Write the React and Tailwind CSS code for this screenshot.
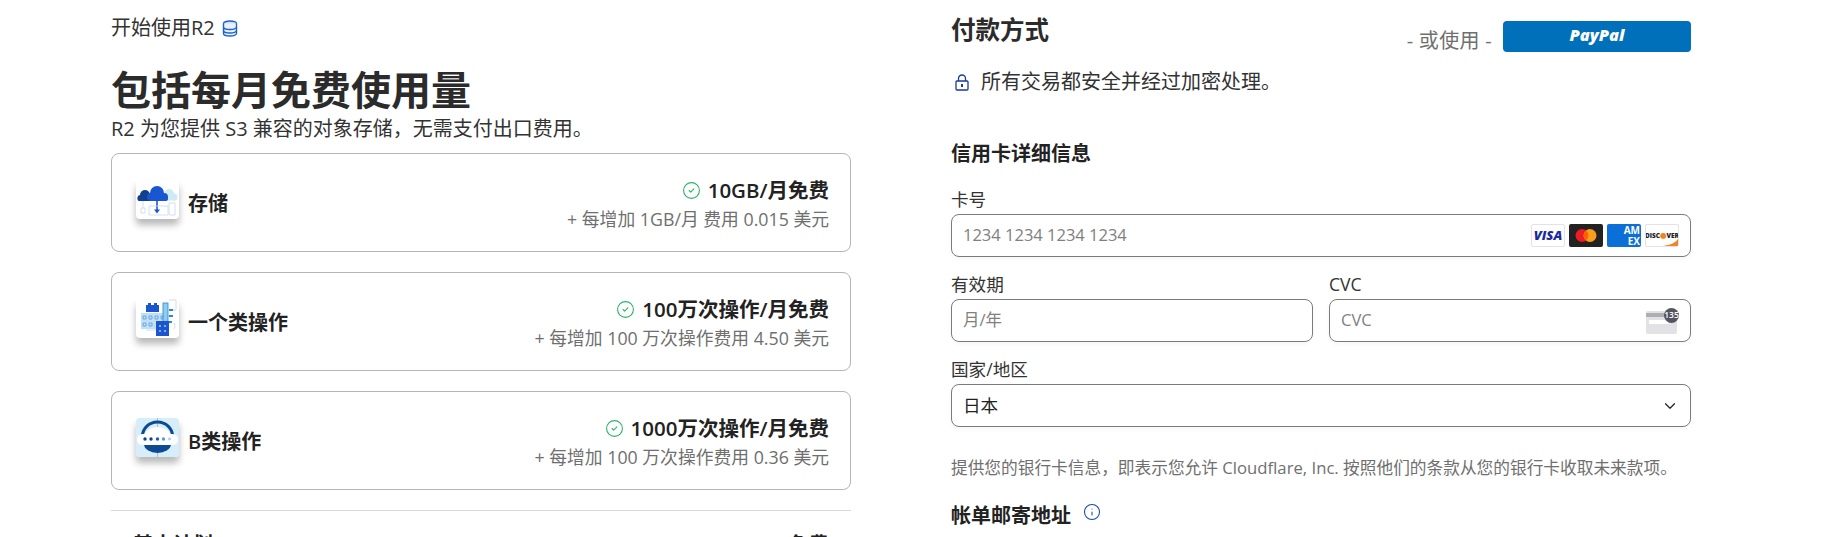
import React from 'react';
import { ChevronDown, CircleCheck, Info } from 'lucide-react';

const sans = 'font-["Open_Sans","Noto_Sans_CJK_SC",sans-serif]';

const DatabaseIcon = () => (
  <svg width="16" height="17" viewBox="0 0 16 17" fill="none" className="ml-[7px]">
    <ellipse cx="8" cy="3.5" rx="6.5" ry="2.5" fill="#cfe0f7" stroke="#1d63c9" strokeWidth="1.4" />
    <path d="M1.5 3.5v10c0 1.4 2.9 2.5 6.5 2.5s6.5-1.1 6.5-2.5v-10" fill="#e8f0fb" stroke="#1d63c9" strokeWidth="1.4" />
    <path d="M1.5 7c0 1.4 2.9 2.5 6.5 2.5s6.5-1.1 6.5-2.5M1.5 10.5c0 1.4 2.9 2.5 6.5 2.5s6.5-1.1 6.5-2.5" stroke="#1d63c9" strokeWidth="1.4" />
  </svg>
);

const LockIcon = () => (
  <svg width="14" height="17" viewBox="0 0 14 17" fill="none">
    <rect x="1" y="7" width="12" height="9" rx="1" stroke="#1a3a9c" strokeWidth="1.3" />
    <path d="M3.5 7V4.5a3.5 3.5 0 0 1 7 0V7" stroke="#1a3a9c" strokeWidth="1.3" />
    <rect x="6" y="10" width="2" height="3" fill="#1a3a9c" />
  </svg>
);

const StorageTile = () => (
  <svg width="43" height="39" viewBox="0 0 43 39" fill="none">
    <g fill="#cfeaf5">
      <circle cx="33" cy="14" r="5" />
      <circle cx="38" cy="17" r="3.5" />
      <rect x="28" y="16" width="13" height="4.5" rx="2" />
    </g>
    <g fill="#123f8f">
      <circle cx="9" cy="15" r="5" />
      <circle cx="4.5" cy="18" r="3" />
      <rect x="1.5" y="17" width="16" height="4" rx="2" />
    </g>
    <g fill="#1a56d0">
      <circle cx="21" cy="13" r="7" />
      <circle cx="15" cy="17" r="4" />
      <circle cx="28" cy="17" r="4" />
      <rect x="13" y="16" width="19" height="5" rx="2.5" />
    </g>
    <path d="M21 20v12" stroke="#1a56d0" strokeWidth="1.6" />
    <path d="M18 29.5l3 4 3-4z" fill="#1a56d0" />
    <path d="M7 21v7M5 28h4v5H5zM13 26h19v9H13zM33 23h6v12h-6z" stroke="#c4daf0" strokeWidth="0.8" />
  </svg>
);

const OpsTile = () => (
  <svg width="43" height="39" viewBox="0 0 43 39" fill="none">
    <path d="M33 1h7v10h-5M33 17h-2M38 30l1-3-1-3M10 31h14" stroke="#bcd5ee" strokeWidth="0.8" />
    <path d="M10 13V6h2V4h3v2h3V4h3v2h2v7z" fill="#1a56d0" />
    <rect x="5" y="14" width="24" height="16" fill="#bfe0f6" />
    <rect x="27" y="4" width="5" height="22" fill="#8fcdf0" stroke="#2b86d8" strokeWidth="0.8" />
    <path d="M33 11h4M33 17h4M33 23h3" stroke="#2b86d8" strokeWidth="2" />
    <path d="M7 17h3v3H7zM13 17h3v3h-3zM19 17h3v3h-3zM25 17h2v3h-2zM7 24h3v3H7zM13 24h3v3h-3z" stroke="#5b9bd8" strokeWidth="0.8" />
    <rect x="20" y="22" width="13" height="15" fill="#1a56d0" />
    <path d="M23 26h2v2h-2zM28 26h2v2h-2zM23 31h2v2h-2zM28 31h2v2h-2z" fill="#7fb0ee" />
  </svg>
);

const ClassBTile = () => (
  <svg width="43" height="39" viewBox="0 0 43 39" fill="none">
    <rect width="43" height="39" fill="#d5eefa" />
    <path d="M21.500 0v39" stroke="#7ba6c9" strokeWidth="0.6" />
    <ellipse cx="21.500" cy="18" rx="13" ry="9" fill="#ffffff" />
    <path d="M6.500 18a15 14 0 0 1 30 0" stroke="#0d4a94" strokeWidth="3" fill="none" />
    <path d="M8 26a13.500 9 0 0 0 27 0z" fill="#0d4a94" />
    <rect x="1" y="16" width="41" height="11" rx="5.500" fill="#ffffff" />
    <circle cx="9" cy="21" r="1.700" fill="#123f8f" />
    <circle cx="15" cy="21" r="1.700" fill="#123f8f" />
    <circle cx="21.500" cy="21" r="1.700" fill="#1a56d0" />
    <circle cx="27.500" cy="21" r="1.700" fill="#5b9bd8" />
    <circle cx="33.500" cy="21" r="1.400" fill="#a8cdee" />
  </svg>
);

const plans = [
  { name: '存储', tile: <StorageTile />, free: '10GB/月免费', extra: '+ 每增加 1GB/月 费用 0.015 美元' },
  { name: '一个类操作', tile: <OpsTile />, free: '100万次操作/月免费', extra: '+ 每增加 100 万次操作费用 4.50 美元' },
  { name: 'B类操作', tile: <ClassBTile />, free: '1000万次操作/月免费', extra: '+ 每增加 100 万次操作费用 0.36 美元' },
];

const PlanCard = ({ plan }) => (
  <div className="h-[99px] rounded-lg border border-[#b5b5b5] pl-[24px] pr-[21px] flex items-center justify-between">
    <div className="flex items-center">
      <div className="w-[43px] h-[39px] mb-[7px] rounded-[4px] overflow-hidden bg-white flex items-center justify-center shadow-[0_6px_7px_rgba(0,0,0,0.28)]">
        {plan.tile}
      </div>
      <span className="ml-[9px] mt-[2px] text-[20px] font-semibold text-[#222]">{plan.name}</span>
    </div>
    <div className="flex flex-col items-end mt-[3px]">
      <div className="flex items-center leading-[30px]">
        <CircleCheck size={19} strokeWidth={1.4} className="text-[#2fb56a] mr-[7px]" />
        <span className="text-[20.500px] font-semibold text-[#222]">{plan.free}</span>
      </div>
      <div className="text-[17.800px] leading-[28px] text-[#6f6f6f]">{plan.extra}</div>
    </div>
  </div>
);

const CardLogos = () => (
  <div className="flex items-center gap-[4px] shrink-0">
    <div className="w-[34px] h-[23px] rounded-[2px] border border-[#e3e3e3] bg-white flex items-center justify-center text-[13px] font-extrabold italic text-[#1a2a9c]">VISA</div>
    <div className="w-[34px] h-[23px] rounded-[2px] bg-[#222] flex items-center justify-center">
      <svg width="24" height="15" viewBox="0 0 24 15">
        <circle cx="8" cy="7.500" r="6.500" fill="#eb1c26" />
        <circle cx="16" cy="7.500" r="6.500" fill="#f79e1b" />
        <path d="M12 2.400a6.500 6.500 0 0 1 0 10.200 6.500 6.500 0 0 1 0-10.200z" fill="#ff5f00" />
      </svg>
    </div>
    <div className="w-[34px] h-[23px] rounded-[2px] bg-[#0a6fd6] flex flex-col items-end justify-center pr-[1px] text-[10px] leading-[11px] font-bold text-white">
      <span>AM</span>
      <span>EX</span>
    </div>
    <div className="relative w-[34px] h-[23px] rounded-[2px] border border-[#e3e3e3] bg-white overflow-hidden flex items-center justify-center text-[6.500px] font-extrabold text-[#222]">
      DISC<span className="text-[#f58220]">●</span>VER
      <svg width="16" height="7" viewBox="0 0 16 7" className="absolute right-0 bottom-0">
        <path d="M16 0v7H1C8 6 13 4 16 0z" fill="#f58220" />
      </svg>
    </div>
  </div>
);

const CvcIcon = () => (
  <div className="relative w-[33px] h-[25px] mt-[1px] shrink-0">
    <div className="w-[31px] h-[23px] mt-[2px] rounded-[2px] bg-[#e2e2e6] flex flex-col">
      <div className="h-[4px] mt-[2px] bg-[#aeaeb2]" />
      <div className="h-[4px] w-[20px] mt-[3px] ml-[3px] bg-white" />
    </div>
    <div className="absolute -top-[1px] right-0 w-[15px] h-[15px] rounded-full bg-[#55555f] flex items-center justify-center text-[8.500px] font-semibold text-white">135</div>
  </div>
);

const Field = ({ label, className, children }) => (
  <div className={className}>
    <div className="text-[17.600px] leading-[26px] text-[#333]">{label}</div>
    {children}
  </div>
);

const boxCls = 'mt-[2px] h-[43px] rounded-lg border border-[#7b7b7b] flex items-center pl-[11px] pr-[11px] shadow-[0_2px_4px_rgba(0,0,0,0.04)]';
const inputCls = 'flex-1 min-w-0 text-[16.500px] text-[#222] placeholder:text-[#808080] outline-none bg-transparent';

export default function App() {
  return (
    <div className={`${sans} h-[537px] overflow-hidden bg-white pl-[111px] pr-[145px] grid grid-cols-[740px_740px] gap-x-[100px] text-[#333]`}>
      <div>
        <div className="mt-[16px] h-[24px] flex items-center text-[20px] text-[#333]">
          开始使用R2
          <DatabaseIcon />
        </div>
        <h1 className="mt-[26px] text-[40px] leading-[48px] font-bold text-[#2b2b2b]">包括每月免费使用量</h1>
        <p className="mt-[1px] text-[20px] leading-[28px] text-[#333]">R2 为您提供 S3 兼容的对象存储，无需支付出口费用。</p>
        <div className="mt-[10px] flex flex-col gap-[20px]">
          {plans.map((p) => <PlanCard key={p.name} plan={p} />)}
        </div>
        <div className="mt-[20px] border-t border-[#d9d9d9] pt-[20px] pl-[22px] pr-[22px] flex justify-between text-[20px] font-semibold leading-[28px] text-[#222]">
          <span>基本计划</span>
          <span>免费</span>
        </div>
      </div>

      <div>
        <div className="mt-[12px] flex items-start justify-between">
          <h2 className="text-[24.500px] leading-[36px] font-bold text-[#2b2b2b]">付款方式</h2>
          <div className="flex items-center mt-[8px]">
            <span className="mt-[9px] text-[20px] leading-[24px] tracking-[0.3px] text-[#6f6f6f]">- 或使用 -</span>
            <div className="ml-[11px] w-[188px] h-[31px] rounded-[4px] bg-[#0070ba] flex items-center justify-center pb-[2px] text-[16.500px] font-extrabold italic text-white">PayPal</div>
          </div>
        </div>
        <div className="mt-[17px] ml-[4px] flex items-center h-[24px]">
          <LockIcon />
          <span className="ml-[12px] text-[20px] text-[#333]">所有交易都安全并经过加密处理。</span>
        </div>
        <h3 className="mt-[46px] text-[20px] leading-[28px] font-semibold text-[#222]">信用卡详细信息</h3>
        <Field label="卡号" className="mt-[18px]">
          <div className={boxCls}>
            <input className={inputCls} placeholder="1234 1234 1234 1234" readOnly />
            <CardLogos />
          </div>
        </Field>
        <div className="mt-[14px] grid grid-cols-2 gap-x-[16px]">
          <Field label="有效期">
            <div className={boxCls}>
              <input className={inputCls} placeholder="月/年" readOnly />
            </div>
          </Field>
          <Field label="CVC">
            <div className={boxCls}>
              <input className={inputCls} placeholder="CVC" readOnly />
              <CvcIcon />
            </div>
          </Field>
        </div>
        <Field label="国家/地区" className="mt-[14px]">
          <div className={`${boxCls} justify-between`}>
            <span className="text-[17.600px] text-[#222]">日本</span>
            <ChevronDown size={18} strokeWidth={1.6} className="text-[#222]" />
          </div>
        </Field>
        <p className="mt-[28px] text-[16.700px] leading-[26px] text-[#6f6f6f] whitespace-nowrap">提供您的银行卡信息，即表示您允许 Cloudflare, Inc. 按照他们的条款从您的银行卡收取未来款项。</p>
        <div className="mt-[21px] flex items-start">
          <h3 className="text-[20px] leading-[28px] font-semibold text-[#222]">帐单邮寄地址</h3>
          <Info size={18} strokeWidth={1.4} className="ml-[12px] mt-[1px] text-[#1848a8]" />
        </div>
      </div>
    </div>
  );
}
